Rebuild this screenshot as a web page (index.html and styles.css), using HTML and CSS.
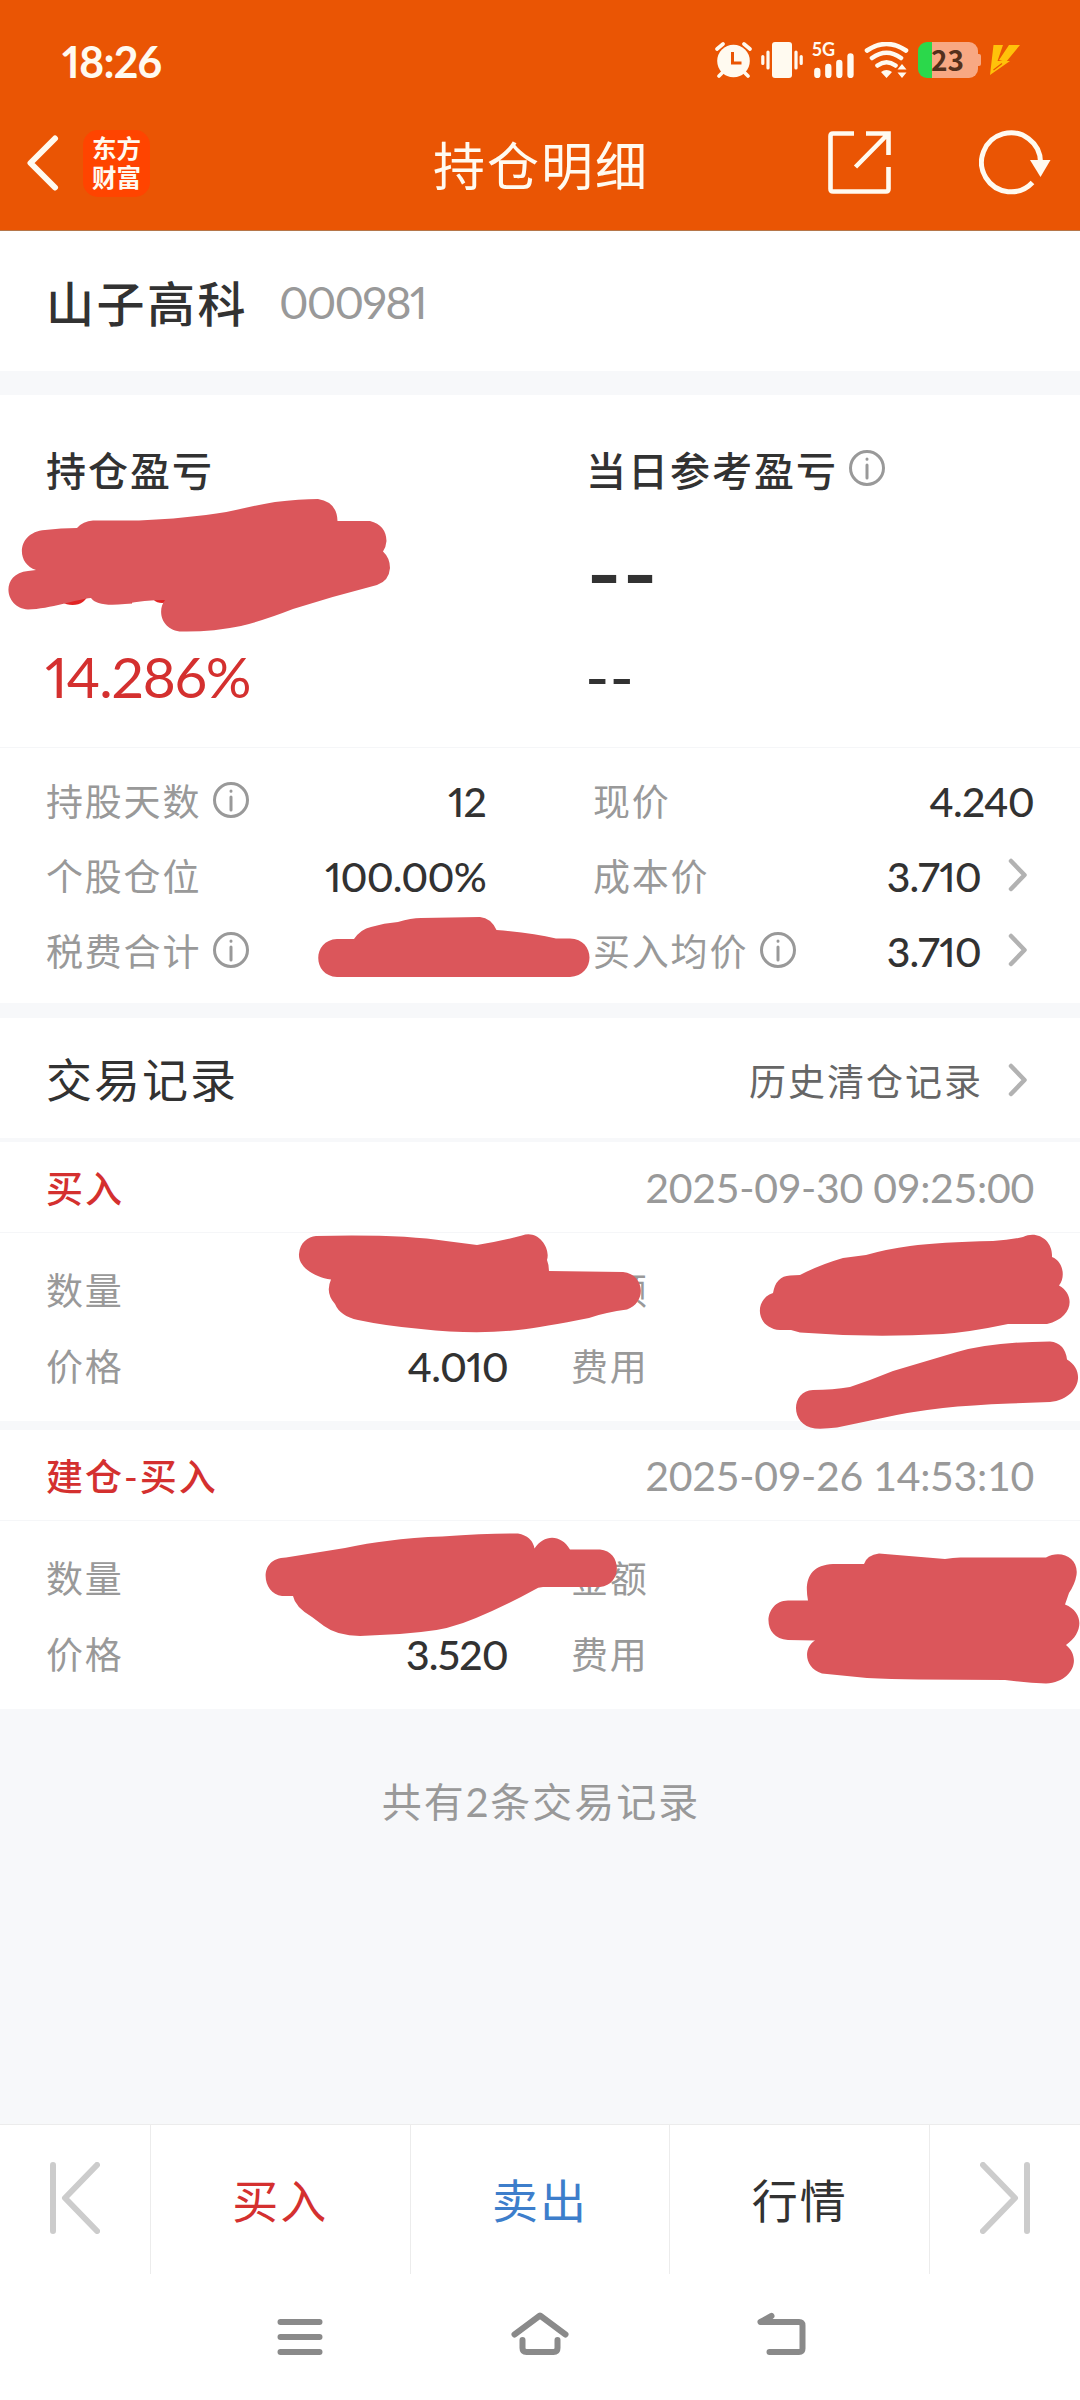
FILE: index.html
```html
<!DOCTYPE html>
<html lang="zh-CN">
<head>
    <meta charset="UTF-8">
    <meta name="viewport" content="width=device-width, initial-scale=1.0">
    <title>持仓明细</title>
    <link rel="stylesheet" href="styles.css">
</head>
<body>
    <div class="screen">
        <header class="header">
            <div class="status-bar">
                <span class="clock">18:26</span>
                <div class="status-icons">
                    <svg width="37" height="36" viewBox="0 0 37 36">
                        <circle cx="18.5" cy="19" r="16.3" fill="#fffaf0"/>
                        <path d="M2 7l6-5M35 7l-6-5M8 30l-4 4M29 30l4 4" stroke="#fffaf0" stroke-width="3.6" stroke-linecap="round"/>
                        <path d="M17.5 10v11h9" fill="none" stroke="#ea5504" stroke-width="3"/>
                    </svg>
                    <svg width="42" height="36" viewBox="0 0 42 36">
                        <rect x="11" y="0" width="20" height="36" rx="3" fill="#fffaf0"/>
                        <path d="M7 10v16M35 10v16M1.8 14.5v7M40.2 14.5v7" stroke="#fffaf0" stroke-width="3.2" stroke-linecap="round"/>
                    </svg>
                    <div class="signal">
                        <span class="net">5G</span>
                        <svg width="43" height="36" viewBox="0 0 43 36">
                            <path d="M5.3 29v4M16.3 25v8M27.3 21v12M38.5 14.5v18.5" stroke="#fffaf0" stroke-width="6.3" stroke-linecap="round"/>
                        </svg>
                    </div>
                    <svg width="45" height="36" viewBox="0 0 45 36">
                        <path d="M3 8.5Q22.5-4.5 42 8.5M8 16Q22.5 5.5 37 16M13.5 23.5Q22.5 17 31.5 23.5" fill="none" stroke="#fffaf0" stroke-width="4.6" stroke-linecap="round"/>
                        <path d="M17 30Q22.5 26 28 30L22.5 36zM33.5 27.5l4.5-5.5 4.5 5.5zM33.5 30.5l4.5 5.5 4.5-5.5z" fill="#fffaf0"/>
                    </svg>
                    <div class="battery"><span class="battery-level">23</span></div>
                    <svg width="30" height="30" viewBox="0 0 30 30">
                        <path d="M3.5 0H13L7.500 16H20L0 30zM19 0H30L16 17 9 15z" fill="#ffc20a"/>
                        <path d="M3.5 25L12 18.5" stroke="#ea5504" stroke-width="1.2"/>
                    </svg>
                </div>
            </div>
            <div class="title-bar">
                <div class="title-left">
                    <svg width="32" height="56" viewBox="0 0 32 56">
                        <path d="M28 3.5L3.5 28 28 52.5" fill="none" stroke="#fffaf0" stroke-width="6" stroke-linecap="round" stroke-linejoin="round"/>
                    </svg>
                    <div class="app-logo">东方<br>财富</div>
                </div>
                <h1 class="title">持仓明细</h1>
                <div class="title-right">
                    <svg width="64" height="64" viewBox="0 0 64 64">
                        <path d="M26 2.5H5Q2.5 2.5 2.5 5V58Q2.5 60.5 5 60.5H58Q60.5 60.5 60.5 58V36M38 2.5H60.5V24M60 3L27.5 36" fill="none" stroke="#fffaf0" stroke-width="4.6"/>
                    </svg>
                    <svg width="72" height="66" viewBox="0 0 72 66">
                        <path d="M53.5 52.5A29.5 29.5 0 1 1 61.5 32" fill="none" stroke="#fffaf0" stroke-width="5"/>
                        <path d="M51 30H71.5L61.5 47z" fill="#fffaf0"/>
                    </svg>
                </div>
            </div>
        </header>

        <main class="content">
            <section class="stock">
                <span class="stock-name">山子高科</span>
                <span class="stock-code">000981</span>
            </section>

            <section class="profit">
                <div class="profit-col">
                    <div class="profit-label">持仓盈亏</div>
                    <div class="profit-amount"></div>
                    <div class="profit-rate">14.286%</div>
                </div>
                <div class="profit-col">
                    <div class="profit-label">当日参考盈亏<svg class="info" viewBox="0 0 36 36"><circle cx="18" cy="18" r="16.5"/><path d="M18 15v13M18 9v.2"/></svg></div>
                    <div class="profit-amount">--</div>
                    <div class="profit-rate empty">--</div>
                </div>
            </section>

            <section class="stats">
                <div class="stats-col">
                    <div class="row"><span class="label">持股天数</span><svg class="info" viewBox="0 0 36 36"><circle cx="18" cy="18" r="16.5"/><path d="M18 15v13M18 9v.2"/></svg><span class="value">12</span></div>
                    <div class="row"><span class="label">个股仓位</span><span class="value">100.00%</span></div>
                    <div class="row"><span class="label">税费合计</span><svg class="info" viewBox="0 0 36 36"><circle cx="18" cy="18" r="16.5"/><path d="M18 15v13M18 9v.2"/></svg></div>
                </div>
                <div class="stats-col">
                    <div class="row"><span class="label">现价</span><span class="value">4.240</span></div>
                    <div class="row"><span class="label">成本价</span><span class="value">3.710</span><svg class="arrow" viewBox="0 0 20 34"><path d="M3 3L16.5 17 3 31"/></svg></div>
                    <div class="row"><span class="label">买入均价</span><svg class="info" viewBox="0 0 36 36"><circle cx="18" cy="18" r="16.5"/><path d="M18 15v13M18 9v.2"/></svg><span class="value">3.710</span><svg class="arrow" viewBox="0 0 20 34"><path d="M3 3L16.5 17 3 31"/></svg></div>
                </div>
            </section>

            <section class="records-head">
                <h2 class="records-title">交易记录</h2>
                <a href="#" class="history">历史清仓记录<svg class="arrow" viewBox="0 0 20 34"><path d="M3 3L16.5 17 3 31"/></svg></a>
            </section>

            <article class="record">
                <div class="record-head">
                    <span class="record-type">买入</span>
                    <span class="record-time">2025-09-30 09:25:00</span>
                </div>
                <div class="record-body">
                    <div class="cell">数量</div>
                    <div class="cell value"></div>
                    <div class="cell second">金额</div>
                    <div class="cell">价格</div>
                    <div class="cell value">4.010</div>
                    <div class="cell second">费用</div>
                </div>
            </article>

            <article class="record">
                <div class="record-head">
                    <span class="record-type">建仓-买入</span>
                    <span class="record-time">2025-09-26 14:53:10</span>
                </div>
                <div class="record-body">
                    <div class="cell">数量</div>
                    <div class="cell value"></div>
                    <div class="cell second">金额</div>
                    <div class="cell">价格</div>
                    <div class="cell value">3.520</div>
                    <div class="cell second">费用</div>
                </div>
            </article>

            <p class="summary">共有2条交易记录</p>
        </main>

        <nav class="actions">
            <a href="#" class="action"><svg width="50" height="72" viewBox="0 0 50 72"><path d="M3 3V69M47 3L15 36 47 69"/></svg></a>
            <a href="#" class="action buy">买入</a>
            <a href="#" class="action sell">卖出</a>
            <a href="#" class="action">行情</a>
            <a href="#" class="action"><svg width="50" height="72" viewBox="0 0 50 72"><path d="M47 3V69M3 3L35 36 3 69"/></svg></a>
        </nav>

        <div class="system-nav">
            <svg width="46" height="44" viewBox="0 0 46 44"><path d="M3.5 10H42.5M3.5 25H42.5M3.5 40H42.5"/></svg>
            <svg width="58" height="44" viewBox="0 0 58 44"><path d="M3.5 22.5L29 3.5 54.5 22.5M11.5 28V36Q11.5 40 15.5 40H42.5Q46.5 40 46.5 36V28"/></svg>
            <svg width="50" height="44" viewBox="0 0 50 44"><path d="M14.5 4L3.5 10H42Q45.5 10 45.5 13.5V36.5Q45.5 40 42 40H12.5"/></svg>
        </div>

        <!-- marker strokes over the private amounts -->
        <svg class="marker" width="1080" height="2400" viewBox="0 0 1080 2400">
            <g fill="#e12424">
                <ellipse cx="72.5" cy="594" rx="15" ry="11"/>
                <rect x="125" y="590" width="7" height="13.5"/>
                <ellipse cx="162" cy="592" rx="12" ry="11"/>
            </g>
            <g fill="#db565b">
                <path d="M77 528Q83 521 93 520.5H139Q174 519 206 515C232 512 250 506 275 502Q300 499 318 499Q337 502 337.5 521H370Q386 525 386.5 541Q386 547 383 551.5Q390 558 390 568Q389 581 377 585Q334 596 293 609Q265 620 241 626Q212 632 182 631.5C163 631 156 612 165 600Q144 600 125 604Q97 607 91 598C77 599 50 609 28 609.5C5 609 -1 574 28 571L36 570C15 563 17 532 45 530Q61 528 77 528z"/>
                <path d="M337 939H354Q361 929 371 927Q384 923 398 922Q411 918 421 918L480 917Q491 918 496.5 930Q532 933 556 938.5H570C596 939 596 976 570 977H337C312 976 312 940 337 939z"/>
                <path d="M316 1236Q400 1234 446 1241L477 1245Q501 1241 522 1235.5C537 1229 551 1247 547 1260Q549 1265 549 1271L623 1272C645 1274 647 1303 627 1309.5Q606 1312 589 1318Q543 1327 518 1330Q475 1335 421 1329Q386 1326 358 1320Q340 1316 335 1304Q325 1293 331 1279.5C313 1277 298 1266 299 1254C300 1242 308 1237 316 1236z"/>
                <path d="M800 1275Q819 1265 843 1258L866 1255Q887 1249 910 1246Q940 1242 993 1241Q1010 1240 1023 1237C1038 1230 1053 1241 1052 1257C1063 1261 1066 1277 1059 1285.5C1076 1295 1073 1318 1047 1324H1008Q970 1332 943 1334Q870 1338 800 1332.5L791 1330H780C755 1328 754 1299 773 1293Q776 1276 790 1275.5z"/>
                <path d="M813 1390Q833 1390 850 1387Q871 1380 893 1371L957 1352Q992 1342 1050 1341.5Q1065 1343 1067 1359.5C1087 1371 1079 1399 1050 1402L1010 1403.5Q971 1405 943 1408Q908 1412 880 1418.5L837 1427.5Q825 1429 815 1428.5C790 1426 790 1391 813 1390z"/>
                <path d="M286 1557.5L345 1548Q368 1543 387 1541Q414 1537 442 1536.5Q488 1533 518 1533.5Q532 1536 534.5 1548.5C544 1534 561 1534 570 1549.5H600C622 1551 623 1585 600 1587H543Q538 1587 534 1590Q505 1606 476 1618Q448 1630 421 1632Q396 1635 370 1635.5Q340 1638 324 1626L312 1617Q295 1607 293 1596H282C262 1594 257 1558 286 1557.5z"/>
                <path d="M833 1564H864Q867 1555 879 1553.5L945 1559Q955 1557 964 1557.5H1046C1061 1549 1079 1558 1076.5 1575Q1075 1584 1069 1593L1065 1604.5C1084 1612 1084 1633 1066 1645C1082 1658 1073 1682 1046 1683.5Q1027 1683 1005 1680L919 1679.5Q890 1679 867 1678L822 1673.5C804 1668 803 1648 815 1640.5L788 1640C761 1639 763 1601 788 1600.5H808C804 1580 810 1565 833 1564z"/>
            </g>
        </svg>
    </div>
</body>
</html>
```
FILE: styles.css
```css
:root {
    --orange: #ea5504;
    --cream: #fffaf0;
    --bg: #f7f8fa;
    --text: #323232;
    --gray: #999;
    --red: #d4302f;
    --blue: #3d7ecb;
}

* {
    margin: 0;
    padding: 0;
    box-sizing: border-box;
}

body {
    background-color: var(--bg);
    color: var(--text);
    font-family: Lato, 'Noto Sans CJK SC', sans-serif;
    font-variant-numeric: proportional-nums;
}

a {
    color: inherit;
    text-decoration: none;
}

svg {
    display: block;
    flex: none;
}

.screen {
    position: relative;
    width: 1080px;
    height: 2400px;
    display: flex;
    flex-direction: column;
    overflow: hidden;
}

.header {
    height: 231px;
    background-color: var(--orange);
    border-bottom: 1px solid #b5764a;
    color: var(--cream);
}

.status-bar {
    display: flex;
    justify-content: space-between;
    align-items: center;
    height: 120px;
    padding: 0 60px 0 62px;
    margin-bottom: -24px;
}

.clock {
    padding-top: 2px;
    font-size: 43px;
    font-weight: 700;
    letter-spacing: -0.8px;
}

.status-icons {
    display: flex;
    align-items: center;
    gap: 9px;
}

.signal {
    position: relative;
}

.net {
    position: absolute;
    top: -5px;
    left: 0;
    font-size: 18px;
    font-weight: 700;
    line-height: 24px;
}

.battery {
    position: relative;
    width: 60px;
    height: 36px;
    margin-right: 3px;
    border-radius: 9px;
    background: linear-gradient(to right, #2bd84b 14px, #f8a883 14px);
}

.battery::after {
    content: '';
    position: absolute;
    top: 12px;
    right: -3px;
    width: 3px;
    height: 12px;
    border-radius: 0 2px 2px 0;
    background-color: #f8a883;
}

.battery-level {
    display: block;
    padding-left: 13px;
    font-family: 'Noto Sans CJK SC', sans-serif;
    font-size: 28px;
    font-weight: 700;
    line-height: 34px;
    color: #54301c;
}

.title-bar {
    display: grid;
    grid-template-columns: 1fr auto 1fr;
    align-items: center;
    height: 134px;
    padding: 0 29px 0 27px;
}

.title-left {
    display: flex;
    align-items: center;
    gap: 24px;
}

.app-logo {
    width: 67px;
    height: 67px;
    padding-top: 4px;
    border-radius: 15px;
    background-color: #ff4400;
    font-size: 24.5px;
    font-weight: 700;
    line-height: 29px;
    text-align: center;
}

.title {
    padding-left: 4px;
    font-size: 52px;
    font-weight: 400;
    letter-spacing: 2px;
}

.title-right {
    display: flex;
    justify-content: flex-end;
    align-items: center;
    gap: 87px;
}

.content {
    flex: 1;
}

.stock {
    display: flex;
    align-items: center;
    height: 140px;
    padding: 0 46px;
    background-color: #fff;
}

.stock-name {
    width: 233px;
    font-size: 48px;
    font-weight: 500;
    letter-spacing: 2.5px;
}

.stock-code {
    padding-top: 2px;
    font-size: 45px;
    letter-spacing: -1.8px;
    color: var(--gray);
}

.profit {
    display: grid;
    grid-template-columns: 540px 1fr;
    height: 353px;
    margin-top: 24px;
    padding: 37px 0 0 46px;
    background-color: #fff;
    border-bottom: 1px solid #f5f6f8;
}

.profit-label {
    display: flex;
    align-items: center;
    height: 74px;
    font-size: 40px;
    font-weight: 500;
    letter-spacing: 2px;
}

.profit-label .info {
    margin: -3px 0 0 11px;
}

.profit-amount {
    height: 136px;
    font-size: 97px;
    font-weight: 500;
    line-height: 129px;
}

.profit-rate {
    margin-left: -1px;
    font-size: 57px;
    line-height: 69px;
    letter-spacing: -1.2px;
    color: var(--red);
}

.profit-rate.empty {
    font-size: 66px;
    letter-spacing: 0;
    line-height: 68px;
    color: var(--text);
}

.info {
    width: 36px;
    height: 36px;
    fill: none;
    stroke: var(--gray);
    stroke-width: 3;
    stroke-linecap: round;
}

.arrow {
    width: 20px;
    height: 34px;
    fill: none;
    stroke: #b2b2b2;
    stroke-width: 4.5;
    stroke-linecap: round;
    stroke-linejoin: round;
}

.stats {
    display: grid;
    grid-template-columns: 440px 441px;
    column-gap: 107px;
    height: 255px;
    padding: 16px 46px 0;
    background-color: #fff;
}

.row {
    display: flex;
    align-items: center;
    height: 75px;
}

.label {
    margin-top: -3px;
    font-size: 37px;
    letter-spacing: 1.8px;
    color: var(--gray);
}

.row .info {
    margin: -3px 0 0 12px;
}

.row .value {
    margin-left: auto;
}

.row .arrow {
    margin: -3px 6px 0 27px;
}

.value {
    font-size: 41px;
    font-weight: 500;
    letter-spacing: -0.8px;
}

.records-head {
    display: flex;
    justify-content: space-between;
    align-items: center;
    height: 120px;
    margin-top: 15px;
    padding: 0 52px 0 46px;
    background-color: #fff;
}

.records-title {
    margin-top: -2px;
    font-size: 46px;
    font-weight: 400;
    letter-spacing: 2px;
}

.history {
    display: flex;
    align-items: center;
    gap: 25px;
    padding-top: 3px;
    font-size: 37px;
    letter-spacing: 2px;
    color: #666;
}

.record {
    margin-top: 4px;
    background-color: #fff;
}

.record + .record {
    margin-top: 9px;
}

.record-head {
    display: flex;
    justify-content: space-between;
    align-items: center;
    height: 91px;
    padding: 0 46px;
    border-bottom: 1px solid #f5f6f8;
}

.record-type {
    font-size: 37px;
    font-weight: 500;
    letter-spacing: 2px;
    color: var(--red);
}

.record-time {
    font-size: 41px;
    font-variant-numeric: tabular-nums;
    letter-spacing: -0.3px;
    color: var(--gray);
}

.record-body {
    display: grid;
    grid-template-columns: 120px 342px 1fr;
    grid-auto-rows: 76px;
    height: 188px;
    padding: 18px 46px 0;
}

.cell {
    display: flex;
    align-items: center;
    font-size: 37px;
    letter-spacing: 1.8px;
    color: var(--gray);
}

.cell.value {
    justify-content: flex-end;
    padding-top: 2px;
    font-size: 41px;
    letter-spacing: -0.8px;
    color: var(--text);
}

.cell.second {
    padding-left: 63px;
}

.summary {
    padding: 63px 0 0 2px;
    font-size: 40px;
    letter-spacing: 2px;
    line-height: 60px;
    text-align: center;
    color: var(--gray);
}

.actions {
    display: grid;
    grid-template-columns: 150px 1fr 1fr 1fr 151px;
    height: 150px;
    background-color: #fff;
    border-top: 1px solid #ececec;
}

.action {
    display: flex;
    justify-content: center;
    align-items: center;
    padding-bottom: 3px;
    font-size: 46px;
    letter-spacing: 2px;
}

.action + .action {
    border-left: 1px solid #ececec;
}

.action svg {
    fill: none;
    stroke: #ccc;
    stroke-width: 6;
    stroke-linecap: round;
    stroke-linejoin: round;
}

.buy {
    color: var(--red);
}

.sell {
    color: var(--blue);
}

.system-nav {
    display: flex;
    justify-content: center;
    gap: 188px;
    height: 126px;
    padding: 38px 0 0 4px;
    background-color: #fff;
}

.system-nav svg {
    fill: none;
    stroke: #8a8a8a;
    stroke-width: 6;
    stroke-linecap: round;
    stroke-linejoin: round;
}

.marker {
    position: absolute;
    top: 0;
    left: 0;
    pointer-events: none;
}
```
